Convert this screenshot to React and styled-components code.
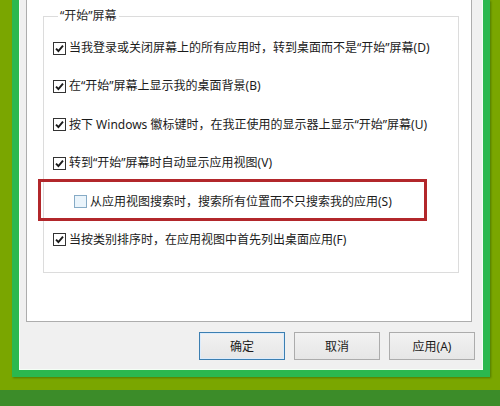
import React from "react";
import styled, { createGlobalStyle, css } from "styled-components";

const Global = createGlobalStyle`
  html, body { margin: 0; padding: 0; }
  body {
    background: #7aa600;
    font-family: "Noto Sans", "Noto Sans CJK SC", sans-serif;
    font-size: 12px;
    color: #1b1b1b;
  }
`;

const Desktop = styled.div`
  width: 500px;
  height: 406px;
  overflow: hidden;
  display: flex;
  flex-direction: column;
  background: #7aa600;
`;

const Window = styled.div`
  margin-left: 12px;
  width: 478px;
  height: 377px;
  box-sizing: border-box;
  border: 7px solid #2bb84f;
  border-top: none;
  box-shadow: 1px 1px 2px rgba(0, 40, 0, 0.35);
  display: flex;
`;

const Body = styled.div`
  flex: 1;
  border: 1px solid #f4fff6;
  border-top: none;
  background: #f0f0f0;
  display: flex;
  flex-direction: column;
  padding-left: 6px;
`;

const Panel = styled.div`
  height: 322px;
  box-sizing: border-box;
  margin-right: 10px;
  background: #ffffff;
  border: 1px solid #adadad;
  border-top: none;
  padding: 8px 0 0 16px;
`;

const Group = styled.fieldset`
  width: 416px;
  box-sizing: border-box;
  margin: 0;
  padding: 14px 9px 22px;
  border: 1px solid #dcdcdc;
  display: flex;
  flex-direction: column;
  gap: 18.4px;
  min-inline-size: 0;
`;

const Legend = styled.legend`
  margin-left: 5px;
  padding: 0 2px;
  line-height: 16px;
  color: #2a2a2a;
`;

const Row = styled.label`
  position: relative;
  height: 20px;
  display: flex;
  align-items: center;
  gap: 3px;
  padding-left: ${(p) => (p.$indent ? "21px" : "0")};
  line-height: 20px;
  white-space: nowrap;
  ${(p) =>
    p.$highlight &&
    css`
      &::after {
        content: "";
        position: absolute;
        left: -15px;
        top: -13px;
        width: 389px;
        height: 42px;
        box-sizing: border-box;
        border: 3px solid #b2272b;
        pointer-events: none;
      }
    `}
`;

const Box = styled.span`
  width: 13px;
  height: 13px;
  box-sizing: border-box;
  flex: none;
  display: flex;
  align-items: center;
  justify-content: center;
  border: 1px solid ${(p) => (p.$checked ? "#333333" : "#86abc6")};
  background: ${(p) => (p.$checked ? "#ffffff" : "#eaf4fb")};
`;

const ButtonBar = styled.div`
  display: flex;
  justify-content: flex-end;
  gap: 9px;
  padding: 10px 7px 9px 0;
`;

const Button = styled.button`
  width: 86px;
  height: 28px;
  box-sizing: border-box;
  font-family: inherit;
  font-size: 12px;
  color: #1b1b1b;
  padding: 0;
  border: 1px solid ${(p) => (p.$focused ? "#3c7fb1" : "#acacac")};
  background: linear-gradient(#f2f2f2, #e6e6e6);
  ${(p) => p.$focused && css`box-shadow: inset 0 0 0 1px #dcecfc;`}
`;

const Taskbar = styled.div`
  margin-top: auto;
  height: 16px;
  background: #3c8c29;
`;

function Check({ checked }) {
  return (
    <Box $checked={checked}>
      {checked && (
        <svg width="11" height="11" viewBox="0 0 11 11">
          <path d="M2 5.6 L4.4 8 L9 2.6" fill="none" stroke="#1a1a1a" strokeWidth="1.9" />
        </svg>
      )}
    </Box>
  );
}

const options = [
  { text: "当我登录或关闭屏幕上的所有应用时，转到桌面而不是“开始”屏幕(D)", checked: true },
  { text: "在“开始”屏幕上显示我的桌面背景(B)", checked: true },
  { text: "按下 Windows 徽标键时，在我正使用的显示器上显示“开始”屏幕(U)", checked: true },
  { text: "转到“开始”屏幕时自动显示应用视图(V)", checked: true },
  { text: "从应用视图搜索时，搜索所有位置而不只搜索我的应用(S)", checked: false, indent: true, highlight: true },
  { text: "当按类别排序时，在应用视图中首先列出桌面应用(F)", checked: true },
];

export default function App() {
  return (
    <>
      <Global />
      <Desktop>
        <Window>
          <Body>
            <Panel>
              <Group>
                <Legend>“开始”屏幕</Legend>
                {options.map((o) => (
                  <Row key={o.text} $indent={o.indent} $highlight={o.highlight}>
                    <Check checked={o.checked} />
                    <span>{o.text}</span>
                  </Row>
                ))}
              </Group>
            </Panel>
            <ButtonBar>
              <Button $focused>确定</Button>
              <Button>取消</Button>
              <Button>应用(A)</Button>
            </ButtonBar>
          </Body>
        </Window>
        <Taskbar />
      </Desktop>
    </>
  );
}
